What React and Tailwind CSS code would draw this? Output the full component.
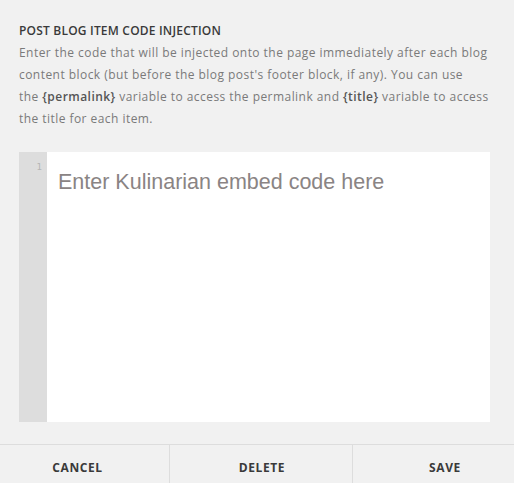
export default function App() {
  return (
    <div className="w-[514px] h-[483px] overflow-hidden bg-[#f1f1f1] flex flex-col" style={{ fontFamily: '"Open Sans", sans-serif' }}>
      <div className="h-[444px] shrink-0 px-[19px] pt-[22px] flex flex-col">
        <h2 className="text-[12px] leading-[18px] font-semibold text-[#3a3a3a] tracking-[0.2px]">POST BLOG ITEM CODE INJECTION</h2>
        <p className="mt-[2px] text-[12px] leading-[22px] text-[#7a7a7a] tracking-[0.45px] whitespace-nowrap">
          Enter the code that will be injected onto the page immediately after each blog<br />
          content block (but before the blog post's footer block, if any). You can use<br />
          the <span className="font-semibold text-[#555]">{'{permalink}'}</span> variable to access the permalink and <span className="font-semibold text-[#555]">{'{title}'}</span> variable to access<br />
          the title for each item.
        </p>
        <div className="mt-[22px] w-[471px] h-[270px] flex bg-white">
          <div className="w-[28px] bg-[#dddddd] flex justify-end pr-[5px] pt-[9px]">
            <span className="text-[9px] leading-[12px] text-[#b5b5b5]" style={{ fontFamily: '"DejaVu Sans Mono", monospace' }}>1</span>
          </div>
          <div className="flex-1 pl-[11px] pt-[17px]">
            <span className="text-[21.5px] leading-[26px] text-[#8a8484]" style={{ fontFamily: '"Liberation Sans", Arial, sans-serif' }}>Enter Kulinarian embed code here</span>
          </div>
        </div>
      </div>
      <div className="h-[46px] shrink-0 border-t border-[#dddddd] flex text-[12px] font-bold text-[#3a3a3a] tracking-[0.6px]">
        <div className="w-[169px] flex items-center justify-center pr-[14px]">CANCEL</div>
        <div className="w-[183px] border-l border-[#dddddd] flex items-center justify-center pl-[2px]">DELETE</div>
        <div className="flex-1 border-l border-[#dddddd] flex items-center justify-center pl-[23px]">SAVE</div>
      </div>
    </div>
  );
}
